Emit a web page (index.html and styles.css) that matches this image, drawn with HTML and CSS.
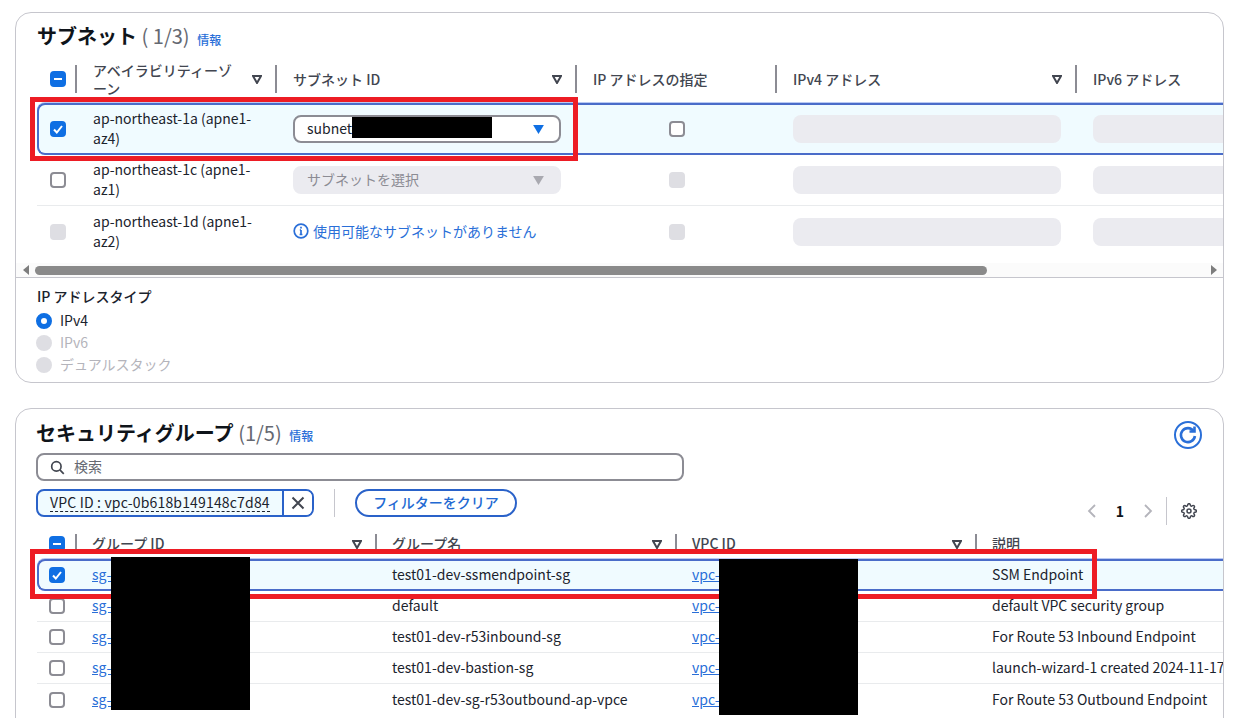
FILE: index.html
```html
<!DOCTYPE html>
<html lang="ja">
<head>
  <meta charset="UTF-8">
  <title>サブネットとセキュリティグループ</title>
  <link rel="stylesheet" href="styles.css">
</head>
<body>
  <div class="page">

    <section class="card card-subnet">
      <div class="card-head">
        <h2>サブネット <span class="count">( 1/3)</span> <a class="info">情報</a></h2>
      </div>

      <div class="table-scroll">
        <div class="row head-row tall">
          <div class="check-cell"><span class="check mixed"><svg viewBox="0 0 16 16"><path d="M4 8h8"/></svg></span></div>
          <div class="th sortable"><span>アベイラビリティーゾーン</span><svg class="sort" viewBox="0 0 10 9"><path d="M1 1h8L5 8z"/></svg></div>
          <div class="th sortable"><span>サブネット ID</span><svg class="sort" viewBox="0 0 10 9"><path d="M1 1h8L5 8z"/></svg></div>
          <div class="th"><span>IP アドレスの指定</span></div>
          <div class="th sortable"><span>IPv4 アドレス</span><svg class="sort" viewBox="0 0 10 9"><path d="M1 1h8L5 8z"/></svg></div>
          <div class="th"><span>IPv6 アドレス</span></div>
        </div>

        <div class="row az-row selected">
          <div class="check-cell"><span class="check on"><svg viewBox="0 0 16 16"><path d="M4 8.5l2.8 3L12 5"/></svg></span></div>
          <div class="td az-name">ap-northeast-1a (apne1-az4)</div>
          <div class="td"><div class="select">subnet-<svg class="caret" viewBox="0 0 12 10"><path d="M0 0h12L6 10z"/></svg></div></div>
          <div class="td ip-cell"><span class="check"></span></div>
          <div class="td"><div class="blank"></div></div>
          <div class="td"><div class="blank"></div></div>
        </div>

        <div class="row az-row divided">
          <div class="check-cell"><span class="check"></span></div>
          <div class="td az-name">ap-northeast-1c (apne1-az1)</div>
          <div class="td"><div class="select disabled">サブネットを選択<svg class="caret" viewBox="0 0 12 10"><path d="M0 0h12L6 10z"/></svg></div></div>
          <div class="td ip-cell"><span class="check off"></span></div>
          <div class="td"><div class="blank"></div></div>
          <div class="td"><div class="blank"></div></div>
        </div>

        <div class="row az-row">
          <div class="check-cell"><span class="check off"></span></div>
          <div class="td az-name">ap-northeast-1d (apne1-az2)</div>
          <div class="td none-msg">
            <svg class="info-icon" viewBox="0 0 16 16"><circle cx="8" cy="8" r="6.8"/><path d="M8 7v4.5M6.6 11.5h2.8M6.8 7H8"/><path class="dot" d="M8 3.8v1.6"/></svg>
            使用可能なサブネットがありません
          </div>
          <div class="td ip-cell"><span class="check off"></span></div>
          <div class="td"><div class="blank"></div></div>
          <div class="td"><div class="blank"></div></div>
        </div>
      </div>

      <div class="scrollbar">
        <svg class="arrow" viewBox="0 0 6 10"><path d="M6 0v10L0 5z"/></svg>
        <div class="thumb"></div>
        <svg class="arrow" viewBox="0 0 6 10"><path d="M0 0v10l6-5z"/></svg>
      </div>

      <div class="ip-type">
        <div class="ip-label">IP アドレスタイプ</div>
        <div class="radio-row"><span class="radio on"></span>IPv4</div>
        <div class="radio-row muted"><span class="radio"></span>IPv6</div>
        <div class="radio-row muted"><span class="radio"></span>デュアルスタック</div>
      </div>
    </section>

    <section class="card card-sg">
      <div class="card-head sg-head">
        <h2>セキュリティグループ <span class="count">(1/5)</span> <a class="info">情報</a></h2>
        <svg class="refresh" viewBox="0 0 30 30"><circle cx="15" cy="15" r="13"/><path class="refresh-arrow" d="M20.6 11a7 7 0 1 0 1.3 5"/><path class="refresh-arrow" d="M21.5 6.5v5h-5"/></svg>
      </div>

      <div class="search">
        <svg viewBox="0 0 16 16"><circle cx="6.8" cy="6.8" r="5"/><path d="M10.5 10.5l4.2 4.2"/></svg>
        検索
      </div>

      <div class="filter-row">
        <div class="token">
          <span class="token-text"><span>VPC ID : vpc-0b618b149148c7d84</span></span>
          <span class="token-x"><svg viewBox="0 0 14 14"><path d="M1.5 1.5l11 11M12.5 1.5l-11 11"/></svg></span>
        </div>
        <div class="filter-sep"></div>
        <button class="clear-btn">フィルターをクリア</button>
        <div class="pager">
          <svg class="chev" viewBox="0 0 10 16"><path d="M8 2L2 8l6 6"/></svg>
          <span class="page-no">1</span>
          <svg class="chev" viewBox="0 0 10 16"><path d="M2 2l6 6-6 6"/></svg>
          <span class="pager-sep"></span>
          <svg class="gear" viewBox="0 0 24 24"><circle cx="12" cy="12" r="3"/><path d="M19.4 15a1.65 1.65 0 0 0 .33 1.82l.06.06a2 2 0 0 1 0 2.83 2 2 0 0 1-2.83 0l-.06-.06a1.65 1.65 0 0 0-1.82-.33 1.65 1.65 0 0 0-1 1.51V21a2 2 0 0 1-2 2 2 2 0 0 1-2-2v-.09A1.65 1.65 0 0 0 9 19.4a1.65 1.65 0 0 0-1.82.33l-.06.06a2 2 0 0 1-2.83 0 2 2 0 0 1 0-2.83l.06-.06a1.65 1.65 0 0 0 .33-1.82 1.65 1.65 0 0 0-1.51-1H3a2 2 0 0 1-2-2 2 2 0 0 1 2-2h.09A1.65 1.65 0 0 0 4.6 9a1.65 1.65 0 0 0-.33-1.82l-.06-.06a2 2 0 0 1 0-2.83 2 2 0 0 1 2.83 0l.06.06a1.65 1.65 0 0 0 1.82.33H9a1.65 1.65 0 0 0 1-1.51V3a2 2 0 0 1 2-2 2 2 0 0 1 2 2v.09a1.65 1.65 0 0 0 1 1.51 1.65 1.65 0 0 0 1.82-.33l.06-.06a2 2 0 0 1 2.83 0 2 2 0 0 1 0 2.83l-.06.06a1.65 1.65 0 0 0-.33 1.82V9a1.65 1.65 0 0 0 1.51 1H21a2 2 0 0 1 2 2 2 2 0 0 1-2 2h-.09a1.65 1.65 0 0 0-1.51 1z"/></svg>
        </div>
      </div>

      <div class="table-scroll sg-table">
        <div class="row head-row short">
          <div class="check-cell"><span class="check mixed"><svg viewBox="0 0 16 16"><path d="M4 8h8"/></svg></span></div>
          <div class="th sortable"><span>グループ ID</span><svg class="sort" viewBox="0 0 10 9"><path d="M1 1h8L5 8z"/></svg></div>
          <div class="th sortable"><span>グループ名</span><svg class="sort" viewBox="0 0 10 9"><path d="M1 1h8L5 8z"/></svg></div>
          <div class="th sortable"><span>VPC ID</span><svg class="sort" viewBox="0 0 10 9"><path d="M1 1h8L5 8z"/></svg></div>
          <div class="th"><span>説明</span></div>
        </div>

        <div class="row sg-row selected">
          <div class="check-cell"><span class="check on"><svg viewBox="0 0 16 16"><path d="M4 8.5l2.8 3L12 5"/></svg></span></div>
          <div class="td"><a class="link">sg-</a></div>
          <div class="td">test01-dev-ssmendpoint-sg</div>
          <div class="td"><a class="link">vpc-</a></div>
          <div class="td">SSM Endpoint</div>
        </div>
        <div class="row sg-row divided">
          <div class="check-cell"><span class="check"></span></div>
          <div class="td"><a class="link">sg-</a></div>
          <div class="td">default</div>
          <div class="td"><a class="link">vpc-</a></div>
          <div class="td">default VPC security group</div>
        </div>
        <div class="row sg-row divided">
          <div class="check-cell"><span class="check"></span></div>
          <div class="td"><a class="link">sg-</a></div>
          <div class="td">test01-dev-r53inbound-sg</div>
          <div class="td"><a class="link">vpc-</a></div>
          <div class="td">For Route 53 Inbound Endpoint</div>
        </div>
        <div class="row sg-row divided">
          <div class="check-cell"><span class="check"></span></div>
          <div class="td"><a class="link">sg-</a></div>
          <div class="td">test01-dev-bastion-sg</div>
          <div class="td"><a class="link">vpc-</a></div>
          <div class="td">launch-wizard-1 created 2024-11-17</div>
        </div>
        <div class="row sg-row">
          <div class="check-cell"><span class="check"></span></div>
          <div class="td"><a class="link">sg-</a></div>
          <div class="td">test01-dev-sg-r53outbound-ap-vpce</div>
          <div class="td"><a class="link">vpc-</a></div>
          <div class="td">For Route 53 Outbound Endpoint</div>
        </div>
      </div>
    </section>

    <!-- annotations drawn over the screenshot -->
    <div class="mark mark-subnet"></div>
    <div class="mark mark-sg"></div>
    <div class="redact redact-subnet"></div>
    <div class="redact redact-sg"></div>
    <div class="redact redact-vpc"></div>
  </div>
</body>
</html>
```

FILE: styles.css
```css
:root {
  --blue: #0f6fe3;
  --link: #2a6fd8;
  --line: #c6c6cd;
  --grey: #8c8c94;
  --disabled: #dedee3;
  --field: #ebebf0;
  --text: #1b232d;
  --head: #424650;
  --selected: #f0fbff;
  --selected-line: #4a6cc9;
  --font: "Noto Sans CJK JP", "Noto Sans", sans-serif;
}

* {
  box-sizing: border-box;
  margin: 0;
  padding: 0;
}

html, body {
  height: 718px;
  overflow: hidden;
  background: #fff;
}

body {
  font-family: var(--font);
  font-size: 14px;
  line-height: 20px;
  color: var(--text);
}

.page {
  position: relative;
  height: 718px;
  overflow: hidden;
  padding: 12px 15px 0;
}

.card {
  border: 1px solid var(--line);
  border-radius: 16px;
  overflow: hidden;
  background: #fff;
}

.card-subnet {
  height: 371px;
  margin-bottom: 25px;
}

.card-sg {
  height: 340px;
}

.card-head {
  height: 48px;
  padding: 10px 0 0 21px;
}

.card-head h2 {
  font-size: 20px;
  line-height: 26px;
  font-weight: 700;
  color: #0f141a;
}

.count {
  font-weight: 400;
  color: #656871;
}

.info {
  font-size: 12px;
  font-weight: 500;
  color: var(--link);
  margin-left: 3px;
  vertical-align: -1px;
}

.sg-head .info {
  vertical-align: 0;
}

/* tables */
.table-scroll {
  overflow: hidden;
  padding-left: 21px;
}

.row {
  display: grid;
  grid-template-columns: 38px 200px 300px 200px 300px 300px;
  width: 1338px;
}

.row.selected {
  grid-template-columns: 36px 200px 300px 200px 300px 300px;
}

.sg-table .row {
  grid-template-columns: 38px 300px 300px 300px 400px;
}

.sg-table .row.selected {
  grid-template-columns: 36px 300px 300px 300px 400px;
}

.head-row.tall {
  grid-template-rows: 38px;
  height: 38px;
  margin-bottom: 4px;
}

.head-row.tall .check-cell {
  padding-bottom: 2px;
}

.head-row.short {
  grid-template-rows: 20px;
  height: 20px;
  margin-bottom: 5px;
}

.check-cell {
  display: flex;
  align-items: center;
  padding-left: 13px;
}

.sg-table .check-cell {
  padding-left: 12px;
}

.th {
  display: flex;
  align-items: center;
  justify-content: space-between;
  padding: 0 13px 2px 18px;
  background: linear-gradient(var(--grey), var(--grey)) left 4px / 2px 28px no-repeat;
  font-weight: 500;
  color: var(--head);
  line-height: 18px;
}

.sg-table .th {
  padding-left: 17px;
  background-position: left center;
}

.th.sortable span {
  width: 146px;
}

.sg-table .th.sortable span,
.th.sortable + .th.sortable span {
  width: auto;
}

.sort {
  flex: none;
  width: 10px;
  height: 9px;
  fill: none;
  stroke: var(--head);
  stroke-width: 2;
}

.sg-table .sort {
  margin-top: 2px;
}

.td {
  display: flex;
  align-items: center;
  padding: 0 14px 0 18px;
  white-space: normal;
}

.td.az-name, .td.none-msg, .sg-row .td {
  padding-bottom: 2px;
}

.sg-table .td {
  padding-left: 17px;
}

.az-row {
  height: 51px;
}

.sg-row {
  height: 31px;
}

.sg-row .td {
  white-space: nowrap;
}

.divided {
  border-bottom: 1px solid #e9ebed;
}

.selected {
  background: var(--selected);
  border: solid var(--selected-line);
  border-width: 2px 0 2px 2px;
  border-radius: 8px 0 0 8px;
  box-shadow: 0 -1px 0 #b9c9f2;
}

.az-row.selected {
  height: 52px;
}

.sg-row.selected {
  height: 32px;
}

.selected .check-cell {
  padding-left: 11px;
}

.sg-table .selected .check-cell {
  padding-left: 10px;
}

.check {
  display: block;
  width: 16px;
  height: 16px;
  border: 2px solid var(--grey);
  border-radius: 4px;
  background: #fff;
}

.check svg {
  display: block;
  width: 16px;
  height: 16px;
  margin: -2px;
  fill: none;
  stroke: #fff;
  stroke-width: 2;
}

.check.on, .check.mixed {
  background: var(--blue);
  border-color: var(--blue);
}

.check.off {
  background: var(--disabled);
  border-color: var(--disabled);
}

.td.ip-cell {
  padding-left: 94px;
}

.select {
  display: flex;
  align-items: center;
  justify-content: space-between;
  width: 268px;
  height: 28px;
  padding: 0 15px 2px 12px;
  background: #fff;
  border: 2px solid var(--grey);
  border-radius: 8px;
}

.select.disabled {
  background: var(--field);
  border-color: var(--field);
  color: #8c8c94;
}

.caret {
  width: 11px;
  height: 9px;
  margin-top: 2px;
  fill: var(--blue);
}

.disabled .caret {
  fill: #a9a9b0;
}

.blank {
  width: 268px;
  height: 28px;
  background: var(--field);
  border-radius: 8px;
}

.none-msg {
  color: var(--link);
  white-space: nowrap;
  gap: 4px;
}

.info-icon {
  flex: none;
  width: 16px;
  height: 16px;
  fill: none;
  stroke: var(--link);
  stroke-width: 1.7;
}

/* horizontal scrollbar under the table */
.scrollbar {
  display: flex;
  align-items: center;
  height: 14px;
  margin-top: 6px;
  padding: 0 6px 0 7px;
  background: #fbfbfb;
}

.arrow {
  flex: none;
  width: 6px;
  height: 10px;
  fill: #7d7d7d;
}

.thumb {
  width: 952px;
  height: 9px;
  margin: 0 auto 0 6px;
  border-radius: 5px;
  background: #8a8a8a;
}

.ip-type {
  border-top: 1px solid var(--line);
  padding: 8px 0 0 20px;
}

.ip-label {
  padding-left: 1px;
  font-weight: 500;
  color: var(--text);
  margin-bottom: 4px;
}

.radio-row {
  display: flex;
  align-items: center;
  gap: 8px;
  height: 22px;
  padding-bottom: 2px;
}

.radio-row.muted {
  color: #b4b4bb;
}

.radio {
  width: 16px;
  height: 16px;
  margin-bottom: -2px;
  border-radius: 50%;
  background: var(--disabled);
}

.radio.on {
  background: #fff;
  border: 5px solid var(--blue);
}

/* security group card */
.sg-head {
  display: flex;
  justify-content: space-between;
  align-items: flex-start;
  height: 44px;
  padding: 11px 20px 0 20px;
}

.refresh {
  flex: none;
  width: 30px;
  height: 30px;
  fill: none;
  stroke: #2a6fd8;
  stroke-width: 2;
}

.refresh-arrow {
  stroke-width: 2.6;
}

.search {
  display: flex;
  align-items: center;
  gap: 9px;
  width: 648px;
  height: 28px;
  margin-left: 20px;
  padding: 0 0 2px 12px;
  border: 2px solid var(--grey);
  border-radius: 8px;
  color: #656871;
}

.search svg {
  width: 15px;
  height: 15px;
  margin-top: 2px;
  fill: none;
  stroke: #424650;
  stroke-width: 1.8;
}

.filter-row {
  display: flex;
  align-items: flex-start;
  height: 34px;
  margin: 8px 0 11px;
  padding: 0 26px 0 20px;
}

.token {
  display: flex;
  height: 28px;
  width: 278px;
  border: 2px solid #2a62c9;
  border-radius: 8px;
  background: var(--selected);
}

.token-text {
  display: flex;
  align-items: center;
  width: 246px;
  padding-left: 12px;
  white-space: nowrap;
  border-right: 2px solid #2a62c9;
  letter-spacing: 0.17px;
}

.token-text span {
  line-height: 17px;
  border-bottom: 1px dashed #1b232d;
}

.token-x {
  flex: 1;
  display: flex;
  align-items: center;
  justify-content: center;
  background: #fff;
  border-radius: 0 6px 6px 0;
}

.token-x svg {
  width: 14px;
  height: 14px;
  stroke: #424650;
  stroke-width: 2;
}

.filter-sep {
  width: 1px;
  height: 28px;
  margin: 0 20px;
  background: #c6c6cd;
}

.clear-btn {
  width: 162px;
  height: 28px;
  padding-bottom: 2px;
  border: 2px solid #2a62c9;
  border-radius: 14px;
  background: #fff;
  color: #2269d2;
  font: 500 14px/20px var(--font);
}

.pager {
  display: flex;
  align-items: center;
  height: 28px;
  margin: 8px 0 0 auto;
}

.chev {
  width: 10px;
  height: 16px;
  fill: none;
  stroke: #b4b4bb;
  stroke-width: 1.8;
}

.page-no {
  width: 46px;
  text-align: center;
  font-weight: 700;
  color: #0f141a;
}

.pager-sep {
  width: 1px;
  height: 28px;
  margin: 0 14px 0 13px;
  background: #c6c6cd;
}

.gear {
  width: 16px;
  height: 16px;
  fill: none;
  stroke: #424650;
  stroke-width: 2.2;
}

.link {
  color: var(--link);
  text-decoration: underline;
}

/* red boxes and black redactions over the screenshot */
.mark {
  position: absolute;
  border: 5px solid #ed1c24;
}

.mark-subnet {
  left: 30px;
  top: 97px;
  width: 548px;
  height: 64px;
}

.mark-sg {
  left: 30px;
  top: 549px;
  width: 1067px;
  height: 50px;
}

.redact {
  position: absolute;
  background: #000;
}

.redact-subnet {
  left: 352px;
  top: 117px;
  width: 140px;
  height: 21px;
}

.redact-sg {
  left: 111px;
  top: 557px;
  width: 139px;
  height: 153px;
}

.redact-vpc {
  left: 719px;
  top: 559px;
  width: 139px;
  height: 156px;
}
```
